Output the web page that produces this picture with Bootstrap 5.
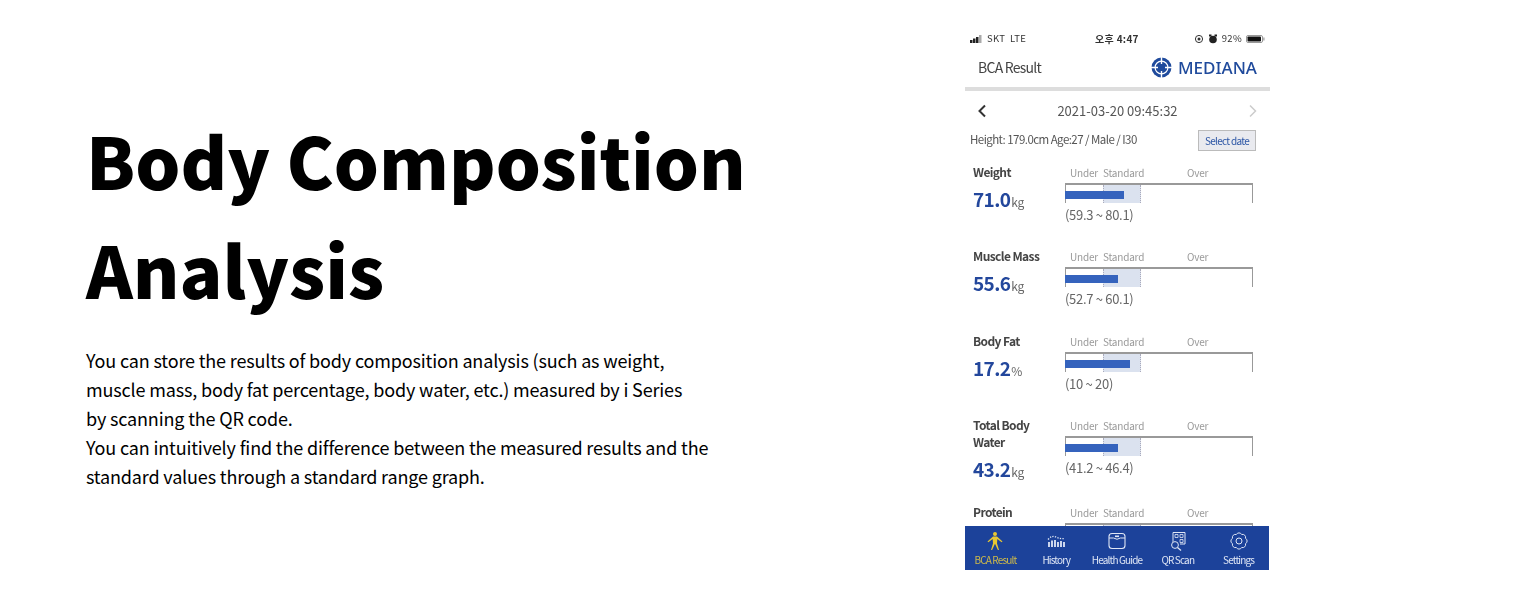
<!DOCTYPE html>
<html lang="en">
<head>
<meta charset="utf-8">
<title>BCA</title>
<link href="https://cdn.jsdelivr.net/npm/bootstrap@5.3.0/dist/css/bootstrap.min.css" rel="stylesheet">
<style>
body { background:#fff; color:#000; font-family:"Noto Sans CJK KR","Noto Sans",sans-serif; overflow:hidden; }
.stage { height:600px; width:1520px; }
.copy-side { width:965px; padding:0 0 0 86px; margin-top:-4px; }
.big-title { font-weight:900; font-size:71px; line-height:109px; margin:0 0 23px 0; letter-spacing:0; }
.big-text { font-size:18px; line-height:29px; letter-spacing:-.16px; margin:0; }
.phone { width:305px; height:540px; margin-top:30px; color:#444; position:relative; overflow:hidden; filter:blur(.5px); }
.status-bar { height:17px; font-size:9.5px; padding:0 5px; color:#333; letter-spacing:.3px; }
.status-mid { margin-left:14px; font-size:10px; }
.app-head { height:44px; padding:1px 13px 0 13px; border-bottom:4px solid #ddd; font-size:14px; letter-spacing:-.75px; }
.logo-word { color:#1f4a9c; font-family:"Noto Sans",sans-serif; font-size:17px; font-weight:500; letter-spacing:0; }
.logo-wrap { gap:6px; }
.date-row { height:39px; padding:0 11px 0 11px; font-size:13px; color:#555; }
.info-row { font-size:11.5px; padding:0 14px 0 5px; height:20px; letter-spacing:-.55px; color:#555; margin-bottom:13px; }
.sel-btn { border:1px solid #bbb; background:#e9eaef; color:#2b55a5; font-size:10px; padding:0 6px; line-height:19px; letter-spacing:-.7px; }
.metric { height:84.3px; padding-left:8px; }
.metric-tall { height:87.5px; }
.metric-left { width:92px; }
.metric-name { font-size:12px; font-weight:700; letter-spacing:-.6px; line-height:17px; color:#444; }
.metric-val { color:#23479c; font-size:19px; font-weight:700; line-height:26px; margin-top:6px; letter-spacing:-.6px; }
.metric-val small { font-size:12px; font-weight:400; color:#666; letter-spacing:0; margin-left:-3px; }
.scale-labels { font-size:10px; color:#999; height:17px; line-height:14px; position:relative; letter-spacing:-.2px; margin-top:3px; }
.scale-labels span { position:absolute; top:0; }
.lbl-under { left:5px; }
.lbl-std { left:38px; }
.lbl-over { left:122px; }
.scale-box { width:188px; height:20px; border-top:2px solid #999; border-right:1px solid #999; border-left:1px solid #999; position:relative; }
.std-zone { position:absolute; left:37px; width:38px; top:0; height:18px; background:#dbe2ef; border-left:1px dotted #aab; border-right:1px dotted #aab; }
.bar-fill { position:absolute; left:-1px; top:6px; height:8px; background:#3563bd; }
.range-txt { font-size:13px; color:#666; margin-top:2px; letter-spacing:-.3px; }
.tab-bar { position:absolute; left:0; right:1px; bottom:0; height:44px; background:#1c429a; color:#dfe6f5; font-size:10px; letter-spacing:-.85px; }
.tab-item { flex:1; text-align:center; line-height:13px; padding-top:5px; }
.tab-item svg { display:block; margin:0 auto 2px; }
.tab-on { color:#cdb94a; }
</style>
</head>
<body>
<div class="stage d-flex align-items-start">
  <div class="copy-side align-self-center">
    <h1 class="big-title">Body Composition<br>Analysis</h1>
    <p class="big-text">You can store the results of body composition analysis (such as weight,<br>muscle mass, body fat percentage, body water, etc.) measured by i Series<br>by scanning the QR code.<br>You can intuitively find the difference between the measured results and the<br>standard values through a standard range graph.</p>
  </div>
  <div class="phone">
    <div class="status-bar d-flex justify-content-between align-items-center">
      <span class="d-flex align-items-center gap-1">
        <svg width="13" height="8" viewBox="0 0 13 8"><rect x="0" y="5" width="2.500" height="3" fill="#222"/><rect x="3" y="3.500" width="2.500" height="4.500" fill="#222"/><rect x="6" y="2" width="2.500" height="6" fill="#222"/><rect x="9" y="0" width="2.500" height="8" fill="#aaa"/></svg>
        <span>SKT&nbsp;&nbsp;LTE</span>
      </span>
      <span class="fw-bold status-mid">오후 4:47</span>
      <span class="d-flex align-items-center gap-1">
        <svg width="10" height="10" viewBox="0 0 10 10"><circle cx="5" cy="5" r="3.600" fill="none" stroke="#333" stroke-width="1"/><circle cx="5" cy="5" r="1.500" fill="#333"/></svg>
        <svg width="10" height="10" viewBox="0 0 10 10"><circle cx="5" cy="5.500" r="3.800" fill="#222"/><rect x="1" y=".5" width="2.500" height="2" fill="#222"/><rect x="6.500" y=".5" width="2.500" height="2" fill="#222"/></svg>
        <span>92%</span>
        <svg width="19" height="8" viewBox="0 0 19 8"><rect x=".5" y=".5" width="16" height="7" rx="1.500" fill="#fff" stroke="#999"/><rect x="1.500" y="1.500" width="13.500" height="5" rx=".8" fill="#111"/><rect x="17.300" y="2.500" width="1.200" height="3" fill="#999"/></svg>
      </span>
    </div>
    <div class="app-head d-flex justify-content-between align-items-center">
      <span>BCA Result</span>
      <span class="d-flex align-items-center logo-wrap">
        <svg width="21" height="21" viewBox="0 0 21 21"><circle cx="10.500" cy="10.500" r="10" fill="#1f4a9c"/><circle cx="10.500" cy="10.500" r="6.400" fill="none" stroke="#fff" stroke-width="1.200"/><path d="M10.500 0V21M0 10.500H21" stroke="#fff" stroke-width="1.400"/><rect x="7" y="7" width="7" height="7" rx="1.400" fill="#1f4a9c"/></svg>
        <span class="logo-word">MEDIANA</span>
      </span>
    </div>
    <div class="date-row d-flex justify-content-between align-items-center">
      <svg width="12" height="14" viewBox="0 0 12 14"><path d="M9 1.500 3.500 7 9 12.500" fill="none" stroke="#333" stroke-width="2"/></svg>
      <span>2021-03-20 09:45:32</span>
      <svg width="12" height="14" viewBox="0 0 12 14"><path d="M3 1.500 8.500 7 3 12.500" fill="none" stroke="#ccc" stroke-width="1.500"/></svg>
    </div>
    <div class="info-row d-flex justify-content-between align-items-center">
      <span>Height: 179.0cm Age:27 / Male / I30</span><span class="sel-btn">Select date</span>
    </div>

    <div class="metric d-flex">
      <div class="metric-left">
        <div class="metric-name">Weight</div>
        <div class="metric-val">71.0 <small>kg</small></div>
      </div>
      <div>
        <div class="scale-labels"><span class="lbl-under">Under</span><span class="lbl-std">Standard</span><span class="lbl-over">Over</span></div>
        <div class="scale-box"><div class="std-zone"></div><div class="bar-fill" style="width:59px"></div></div>
        <div class="range-txt">(59.3 ~ 80.1)</div>
      </div>
    </div>
    <div class="metric d-flex">
      <div class="metric-left">
        <div class="metric-name">Muscle Mass</div>
        <div class="metric-val">55.6 <small>kg</small></div>
      </div>
      <div>
        <div class="scale-labels"><span class="lbl-under">Under</span><span class="lbl-std">Standard</span><span class="lbl-over">Over</span></div>
        <div class="scale-box"><div class="std-zone"></div><div class="bar-fill" style="width:53px"></div></div>
        <div class="range-txt">(52.7 ~ 60.1)</div>
      </div>
    </div>
    <div class="metric d-flex">
      <div class="metric-left">
        <div class="metric-name">Body Fat</div>
        <div class="metric-val">17.2 <small>%</small></div>
      </div>
      <div>
        <div class="scale-labels"><span class="lbl-under">Under</span><span class="lbl-std">Standard</span><span class="lbl-over">Over</span></div>
        <div class="scale-box"><div class="std-zone"></div><div class="bar-fill" style="width:65px"></div></div>
        <div class="range-txt">(10 ~ 20)</div>
      </div>
    </div>
    <div class="metric metric-tall d-flex">
      <div class="metric-left">
        <div class="metric-name">Total Body<br>Water</div>
        <div class="metric-val">43.2 <small>kg</small></div>
      </div>
      <div>
        <div class="scale-labels"><span class="lbl-under">Under</span><span class="lbl-std">Standard</span><span class="lbl-over">Over</span></div>
        <div class="scale-box"><div class="std-zone"></div><div class="bar-fill" style="width:53px"></div></div>
        <div class="range-txt">(41.2 ~ 46.4)</div>
      </div>
    </div>
    <div class="metric d-flex">
      <div class="metric-left">
        <div class="metric-name">Protein</div>
      </div>
      <div>
        <div class="scale-labels"><span class="lbl-under">Under</span><span class="lbl-std">Standard</span><span class="lbl-over">Over</span></div>
        <div class="scale-box"><div class="std-zone"></div></div>
      </div>
    </div>

    <div class="tab-bar d-flex">
      <div class="tab-item tab-on">
        <svg width="20" height="20" viewBox="0 0 20 20"><circle cx="10" cy="3" r="2" fill="#e8c832"/><path d="M2.500 10.500 8 5.500h4l5.500 5-.8.8L12.300 8 12 12.500 14 19h-1.100L10 12.800 7.100 19H6l2-6.500L7.700 8l-4.400 3.300z" fill="#e8c832"/></svg>
        BCA Result
      </div>
      <div class="tab-item">
        <svg width="20" height="20" viewBox="0 0 20 20"><path d="M2 8.500Q6 4 10 6t8 1.500" fill="none" stroke="#dfe6f5" stroke-width="1.300" stroke-dasharray="1.300 1.300"/><path d="M3 16v-5M6 16V9.500M9 16v-7M12 16v-5M15 16v-6M18 16v-5" stroke="#dfe6f5" stroke-width="1.800"/></svg>
        History
      </div>
      <div class="tab-item">
        <svg width="20" height="20" viewBox="0 0 20 20"><rect x="2" y="2.500" width="16" height="15" rx="3" fill="none" stroke="#dfe6f5" stroke-width="1.100"/><path d="M2 7H6.500Q10 9.500 13.500 7H18" fill="none" stroke="#dfe6f5"/><rect x="8" y="4.500" width="4" height="1.600" fill="#dfe6f5"/></svg>
        Health Guide
      </div>
      <div class="tab-item">
        <svg width="20" height="20" viewBox="0 0 20 20"><path d="M5 11V1.500H17V13H12" fill="none" stroke="#dfe6f5"/><path d="M7 3.500h3v3H7zM12 3.500h3v3h-3zM12 8.500h3v3h-3z" fill="none" stroke="#dfe6f5" stroke-width=".8"/><circle cx="7" cy="14" r="3.400" fill="#1c429a" stroke="#dfe6f5"/><path d="M9.500 16.500 13 19.500" stroke="#dfe6f5" stroke-width="1.300"/></svg>
        QR Scan
      </div>
      <div class="tab-item">
        <svg width="20" height="20" viewBox="0 0 20 20"><path d="M16.470 12.680A3 3 0 0 1 12.680 16.470 3 3 0 0 1 7.320 16.470 3 3 0 0 1 3.530 12.680 3 3 0 0 1 3.530 7.320 3 3 0 0 1 7.320 3.530 3 3 0 0 1 12.680 3.530 3 3 0 0 1 16.470 7.320 3 3 0 0 1 16.470 12.680Z" fill="none" stroke="#dfe6f5"/><circle cx="10" cy="10" r="3" fill="none" stroke="#dfe6f5"/></svg>
        Settings
      </div>
    </div>
  </div>
</div>
</body>
</html>
